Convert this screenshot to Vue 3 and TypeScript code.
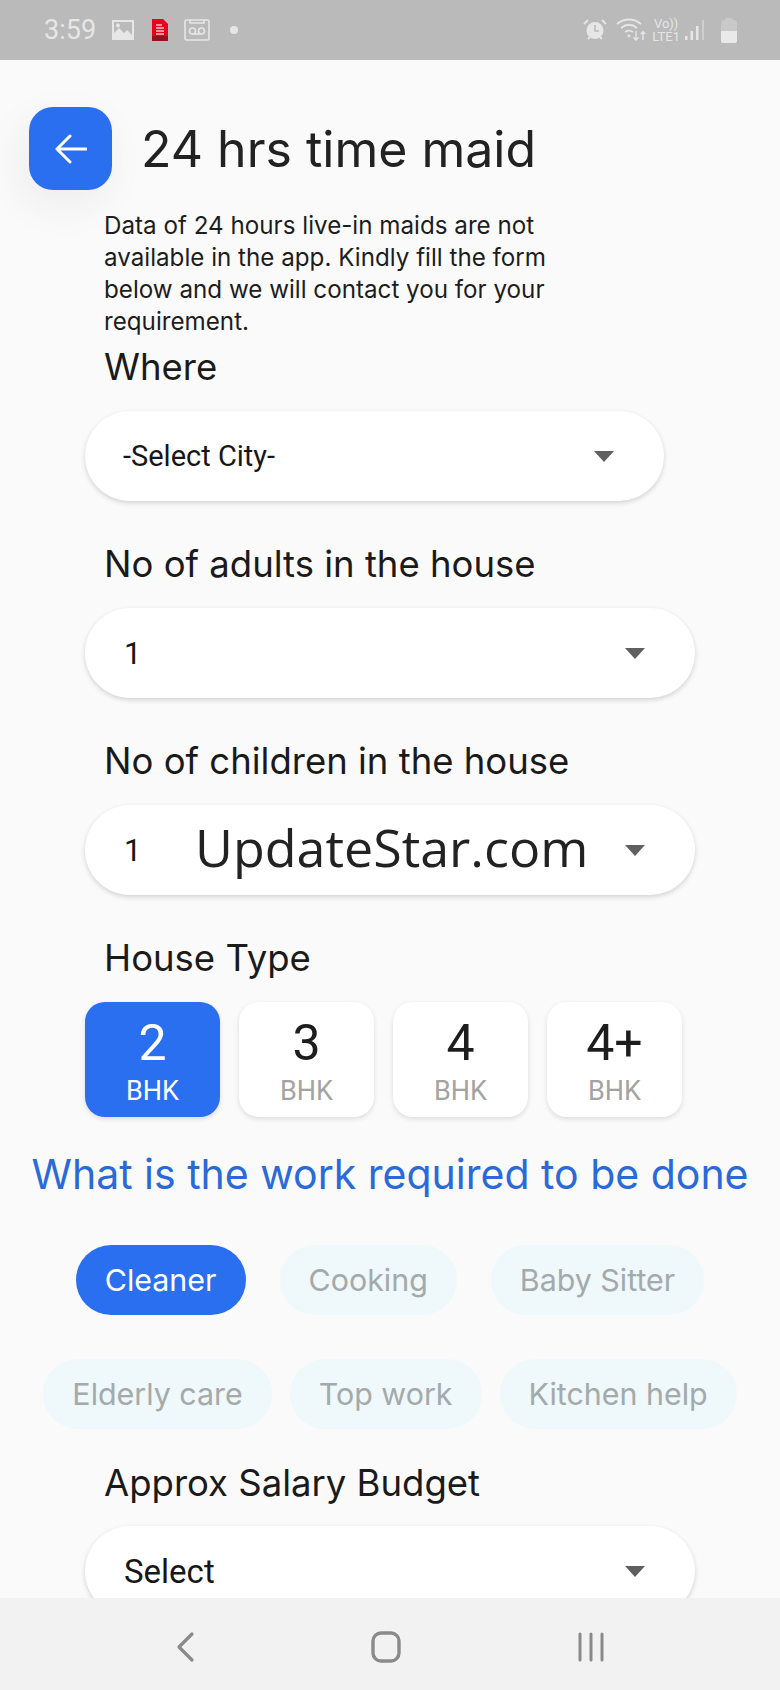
<script setup lang="ts">
import { ref } from 'vue'

const houseTypes = ['2', '3', '4', '4+']
const selectedHouse = ref('2')

const workRows = [
  ['Cleaner', 'Cooking', 'Baby Sitter'],
  ['Elderly care', 'Top work', 'Kitchen help'],
]
const selectedWork = ref('Cleaner')
</script>

<template>
  <div class="screen">
    <div class="status-bar">
      <div class="status-left">
        <span class="clock">3:59</span>
        <svg class="st-icon" width="24" height="22" viewBox="0 0 24 22">
          <path fill="#e6e6e6" fill-rule="evenodd" d="M1 1h22v20H1zM3 3v11l5-5 5 5 3-3 5 5V3z" />
          <circle cx="7" cy="6.5" r="2" fill="#e6e6e6" />
        </svg>
        <svg class="st-icon pdf" width="18" height="22" viewBox="0 0 18 22">
          <path fill="#e8001c" d="M1 0h11l5 5v17H1z" />
          <rect x="1" y="17" width="16" height="5" fill="#98101e" />
          <path stroke="#ffc4cc" stroke-width="1.5" d="M5 6h6M5 9h8M5 12h8M5 15h8" />
        </svg>
        <svg class="st-icon" width="26" height="22" viewBox="0 0 26 22" fill="none" stroke="#e6e6e6" stroke-width="1.6">
          <rect x="1" y="1" width="24" height="20" rx="1.5" />
          <path d="M6 1v3h14V1" />
          <circle cx="8.5" cy="12" r="3" />
          <circle cx="17.5" cy="12" r="3" />
          <path d="M8.5 15h9" />
        </svg>
        <span class="dot"></span>
      </div>
      <div class="status-right">
        <svg class="alarm" width="24" height="24" viewBox="0 0 24 24">
          <circle cx="12" cy="12.5" r="8.5" fill="#e6e6e6" />
          <path d="M12 7v6h4" stroke="#bababa" stroke-width="1.6" fill="none" />
          <path d="M1 6l4-4M23 6l-4-4M5 21l2-2M19 21l-2-2" stroke="#e6e6e6" stroke-width="2" />
        </svg>
        <svg class="wifi" width="30" height="24" viewBox="0 0 30 24" fill="none" stroke="#e6e6e6" stroke-width="1.8">
          <path d="M1 6c7-6 17-6 24 0M5 10c5-4 11-4 16 0M9 14c3-2 5-2 8 0" />
          <circle cx="13" cy="18" r="1.4" fill="#e6e6e6" stroke="none" />
          <path d="M20 13v9M17.5 19.5l2.5 2.5 2.5-2.5M27 22v-8M24.8 16l2.2-2.2 2.2 2.2" stroke-width="1.4" />
        </svg>
        <span class="volte"><span>Vo))</span><span>LTE1</span></span>
        <svg class="signal" width="20" height="22" viewBox="0 0 20 22">
          <rect x="0" y="17" width="2.5" height="4" fill="#e6e6e6" />
          <rect x="5.5" y="12" width="2.5" height="9" fill="#e6e6e6" />
          <rect x="11" y="7" width="2.5" height="14" fill="#e6e6e6" />
          <rect x="17" y="1" width="2" height="20" fill="#cfcfcf" />
        </svg>
        <svg width="16" height="25" viewBox="0 0 16 25">
          <path fill="#c9c9c9" d="M5 0h6l1 2c2 0 4 1 4 3v8H0V5c0-2 2-3 4-3z" />
          <path fill="#e9e9e9" d="M0 13h16v10a2 2 0 0 1-2 2H2a2 2 0 0 1-2-2z" />
        </svg>
      </div>
    </div>

    <main class="content">
      <header class="top-row">
        <button class="back-btn" type="button">
          <svg width="32" height="32" viewBox="0 0 32 32" fill="none" stroke="#fff" stroke-width="3" stroke-linecap="round" stroke-linejoin="round">
            <path d="M2 16h29M15 3L2 16l13 13" />
          </svg>
        </button>
        <h1 class="title">24 hrs time maid</h1>
      </header>

      <p class="intro">
        Data of 24 hours live-in maids are not<br />
        available in the app. Kindly fill the form<br />
        below and we will contact you for your<br />
        requirement.
      </p>

      <label class="field-label where">Where</label>
      <div class="select short">
        <span>-Select City-</span>
        <span class="caret"></span>
      </div>

      <label class="field-label">No of adults in the house</label>
      <div class="select">
        <span class="num">1</span>
        <span class="caret"></span>
      </div>

      <label class="field-label">No of children in the house</label>
      <div class="select">
        <span class="num">1</span>
        <span class="caret"></span>
        <span class="watermark">UpdateStar.com</span>
      </div>

      <label class="field-label">House Type</label>
      <div class="house-grid">
        <div
          v-for="h in houseTypes"
          :key="h"
          class="house-card"
          :class="{ active: h === selectedHouse }"
        >
          <span class="house-num">{{ h }}</span>
          <span class="house-unit">BHK</span>
        </div>
      </div>

      <h2 class="work-title">What is the work required to be done</h2>

      <div class="chips">
        <div v-for="(row, i) in workRows" :key="i" class="chip-row">
          <span
            v-for="w in row"
            :key="w"
            class="chip"
            :class="{ active: w === selectedWork }"
          >{{ w }}</span>
        </div>
      </div>

      <label class="field-label salary">Approx Salary Budget</label>
      <div class="select">
        <span class="select-big">Select</span>
        <span class="caret"></span>
      </div>
    </main>

    <nav class="nav-bar">
      <svg width="20" height="32" viewBox="0 0 20 32" fill="none" stroke="#8a8a8a" stroke-width="3.2" stroke-linecap="round" stroke-linejoin="round">
        <path d="M17 3L4 16l13 13" />
      </svg>
      <svg width="30" height="32" viewBox="0 0 30 32" fill="none" stroke="#8a8a8a" stroke-width="3.4">
        <rect x="2" y="2" width="26" height="28" rx="8" />
      </svg>
      <svg width="28" height="30" viewBox="0 0 28 30" fill="none" stroke="#8a8a8a" stroke-width="3" stroke-linecap="round">
        <path d="M3 2v26M14 2v26M25 2v26" />
      </svg>
    </nav>
  </div>
</template>

<style>
body {
  margin: 0;
  background: #fafafa;
}
</style>

<style scoped>
.screen {
  width: 780px;
  height: 1690px;
  display: flex;
  flex-direction: column;
  overflow: hidden;
  background: #fafafa;
  font-family: 'Inter', 'Noto Sans', sans-serif;
  color: #1d1d1d;
}

/* status bar */
.status-bar {
  height: 60px;
  flex: none;
  background: #bababa;
  display: flex;
  align-items: center;
  justify-content: space-between;
  padding: 0 43px 0 44px;
}
.status-left,
.status-right {
  display: flex;
  align-items: center;
}
.clock {
  font-family: 'Roboto', sans-serif;
  font-size: 27px;
  color: #e6e6e6;
  margin-right: 15px;
}
.st-icon {
  margin-right: 16px;
}
.pdf {
  margin-right: 15px;
}
.dot {
  width: 8px;
  height: 8px;
  border-radius: 50%;
  background: #e6e6e6;
  margin-left: 4px;
}
.alarm {
  margin-right: 9px;
}
.wifi {
  margin-right: 6px;
}
.volte {
  display: flex;
  flex-direction: column;
  align-items: center;
  font-family: 'Roboto', sans-serif;
  font-size: 13px;
  line-height: 13px;
  color: #e6e6e6;
  margin-right: 5px;
}
.signal {
  margin-right: 16px;
}

/* page */
.content {
  flex: 1;
  min-height: 0;
  overflow: hidden;
  padding-top: 47px;
}
.top-row {
  display: flex;
  align-items: center;
  gap: 29px;
  padding-left: 29px;
}
.back-btn {
  width: 83px;
  height: 83px;
  border: none;
  border-radius: 24px;
  background: #2a6ff0;
  display: flex;
  align-items: center;
  justify-content: center;
  padding: 0;
  box-shadow: -6px 14px 44px rgba(0, 0, 0, 0.06);
}
.title {
  margin: 0;
  font-size: 50px;
  font-weight: 400;
  color: #222;
  letter-spacing: 0;
}
.intro {
  margin: 20px 0 0 104px;
  font-size: 24.2px;
  line-height: 32px;
  color: #1d1d1d;
}

.field-label {
  display: block;
  margin: 41px 0 22px 104px;
  height: 44px;
  line-height: 44px;
  font-size: 36.5px;
  color: #1a1a1a;
}
.where {
  margin-top: 7px;
  margin-bottom: 22px;
}
.salary {
  margin-top: 32px;
  margin-bottom: 21px;
}

.select {
  position: relative;
  width: 610px;
  height: 90px;
  margin-left: 85px;
  box-sizing: border-box;
  padding: 0 50px 0 39px;
  border-radius: 45px;
  background: #fff;
  box-shadow: 0 2px 5px rgba(0, 0, 0, 0.16);
  display: flex;
  align-items: center;
  justify-content: space-between;
  font-family: 'Roboto', sans-serif;
  font-size: 29px;
  color: #161616;
}
.short {
  width: 579px;
  padding-left: 38px;
}
.num {
  font-size: 31px;
}
.select-big {
  font-size: 33px;
}
.caret {
  width: 0;
  height: 0;
  border-left: 10px solid transparent;
  border-right: 10px solid transparent;
  border-top: 11px solid #5f5f5f;
}
.watermark {
  position: absolute;
  left: 110px;
  top: 7px;
  font-family: 'Open Sans', sans-serif;
  font-size: 52px;
  line-height: 70px;
  color: #222;
}

.house-grid {
  display: flex;
  gap: 19px;
  margin-left: 85px;
}
.house-card {
  width: 135px;
  height: 115px;
  border-radius: 20px;
  background: #fff;
  box-shadow: 0 2px 5px rgba(0, 0, 0, 0.12);
  display: flex;
  flex-direction: column;
  align-items: center;
  font-family: 'Roboto', sans-serif;
}
.house-num {
  font-size: 50px;
  line-height: 54px;
  margin-top: 14px;
  color: #1d1d1d;
}
.house-unit {
  font-size: 27px;
  line-height: 30px;
  margin-top: 6px;
  color: #a3a3a3;
}
.house-card.active {
  background: #2a6ff0;
}
.house-card.active .house-num,
.house-card.active .house-unit {
  color: #fff;
}

.work-title {
  margin: 33px 0 0;
  text-align: center;
  font-size: 41px;
  line-height: 48px;
  font-weight: 400;
  color: #2a6ad8;
  white-space: nowrap;
}

.chips {
  display: flex;
  flex-direction: column;
  gap: 44px;
  margin-top: 47px;
}
.chip-row {
  display: flex;
  justify-content: center;
  gap: 34px;
}
.chip-row + .chip-row {
  gap: 18px;
}
.chip {
  height: 70px;
  padding: 0 29px;
  border-radius: 35px;
  background: #eff8fa;
  color: #a4aaab;
  font-size: 30.4px;
  line-height: 70px;
  white-space: nowrap;
}
.chip.active {
  background: #2a6ff0;
  color: #fff;
}

.nav-bar {
  height: 92px;
  flex: none;
  background: #f2f2f2;
  display: flex;
  align-items: center;
  justify-content: center;
  gap: 176px;
  padding-top: 6px;
  box-sizing: border-box;
}
</style>
